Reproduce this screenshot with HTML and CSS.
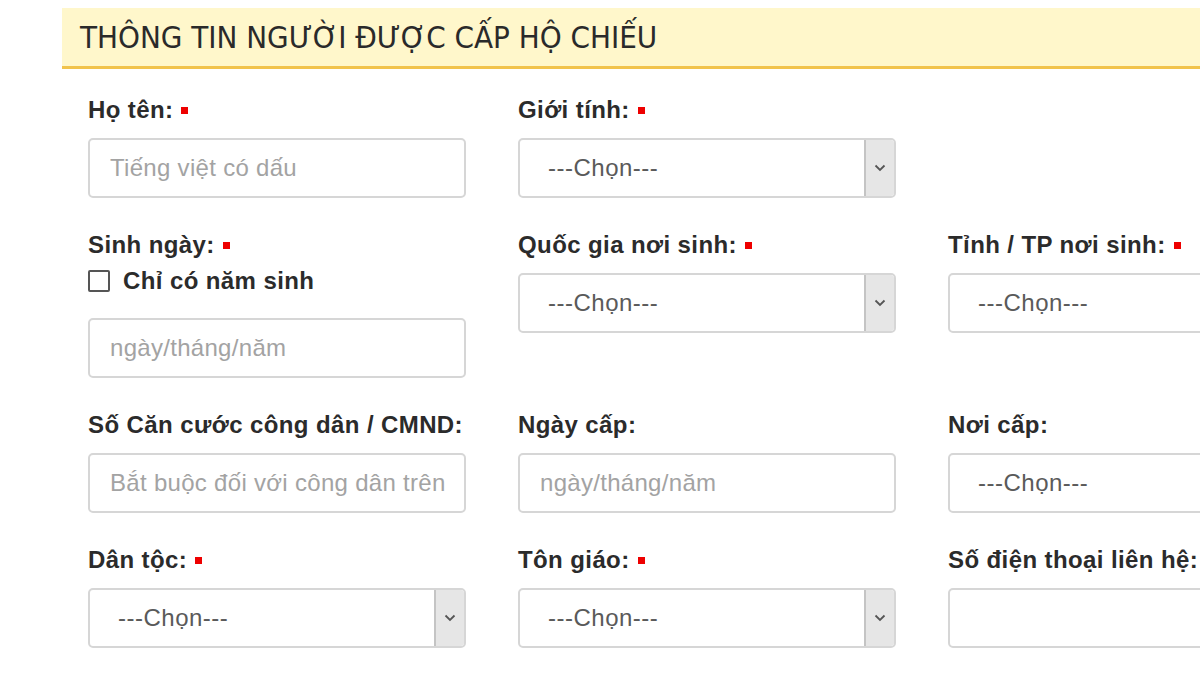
FILE: index.html
```html
<!DOCTYPE html>
<html lang="vi">
<head>
<meta charset="utf-8">
<title>Thông tin người được cấp hộ chiếu</title>
<link rel="stylesheet" href="styles.css">
</head>
<body>
<div class="page">
  <div class="section-head">
    <h2 class="section-title">THÔNG TIN NGƯỜI ĐƯỢC CẤP HỘ CHIẾU</h2>
  </div>
  <div class="form-grid">
    <div class="field">
      <label class="lbl">Họ tên: <span class="req"></span></label>
      <div class="input"><span class="ph">Tiếng việt có dấu</span></div>
    </div>
    <div class="field">
      <label class="lbl">Giới tính: <span class="req"></span></label>
      <div class="input select"><span class="val">---Chọn---</span><span class="arrow"><svg width="12" height="8" viewBox="0 0 12 8"><path d="M1.5 1.5 L6 6 L10.5 1.5" fill="none" stroke="#555" stroke-width="1.8"/></svg></span></div>
    </div>
    <div class="field"></div>

    <div class="field">
      <label class="lbl">Sinh ngày: <span class="req"></span></label>
      <div class="check-row"><span class="checkbox"></span><span class="check-text">Chỉ có năm sinh</span></div>
      <div class="input"><span class="ph">ngày/tháng/năm</span></div>
    </div>
    <div class="field">
      <label class="lbl">Quốc gia nơi sinh: <span class="req"></span></label>
      <div class="input select"><span class="val">---Chọn---</span><span class="arrow"><svg width="12" height="8" viewBox="0 0 12 8"><path d="M1.5 1.5 L6 6 L10.5 1.5" fill="none" stroke="#555" stroke-width="1.8"/></svg></span></div>
    </div>
    <div class="field">
      <label class="lbl">Tỉnh / TP nơi sinh: <span class="req"></span></label>
      <div class="input select"><span class="val">---Chọn---</span><span class="arrow"><svg width="12" height="8" viewBox="0 0 12 8"><path d="M1.5 1.5 L6 6 L10.5 1.5" fill="none" stroke="#555" stroke-width="1.8"/></svg></span></div>
    </div>

    <div class="field">
      <label class="lbl">Số Căn cước công dân / CMND:</label>
      <div class="input"><span class="ph">Bắt buộc đối với công dân trên</span></div>
    </div>
    <div class="field">
      <label class="lbl">Ngày cấp:</label>
      <div class="input"><span class="ph">ngày/tháng/năm</span></div>
    </div>
    <div class="field">
      <label class="lbl">Nơi cấp:</label>
      <div class="input select"><span class="val">---Chọn---</span><span class="arrow"><svg width="12" height="8" viewBox="0 0 12 8"><path d="M1.5 1.5 L6 6 L10.5 1.5" fill="none" stroke="#555" stroke-width="1.8"/></svg></span></div>
    </div>

    <div class="field">
      <label class="lbl">Dân tộc: <span class="req"></span></label>
      <div class="input select"><span class="val">---Chọn---</span><span class="arrow"><svg width="12" height="8" viewBox="0 0 12 8"><path d="M1.5 1.5 L6 6 L10.5 1.5" fill="none" stroke="#555" stroke-width="1.8"/></svg></span></div>
    </div>
    <div class="field">
      <label class="lbl">Tôn giáo: <span class="req"></span></label>
      <div class="input select"><span class="val">---Chọn---</span><span class="arrow"><svg width="12" height="8" viewBox="0 0 12 8"><path d="M1.5 1.5 L6 6 L10.5 1.5" fill="none" stroke="#555" stroke-width="1.8"/></svg></span></div>
    </div>
    <div class="field">
      <label class="lbl">Số điện thoại liên hệ:</label>
      <div class="input"></div>
    </div>
  </div>
</div>
</body>
</html>
```

FILE: styles.css
```css
html, body {
  margin: 0;
  padding: 0;
  background: #ffffff;
  overflow: hidden;
}

body {
  width: 1200px;
  height: 675px;
  font-family: "Liberation Sans", Arial, sans-serif;
  color: #333333;
}

.page {
  padding: 8px 0 0 62px;
  width: 1138px;
  overflow: hidden;
}

.section-head {
  background: #fff7cb;
  border-bottom: 3px solid #f1c34c;
  height: 58px;
  display: flex;
  align-items: center;
  padding-left: 18px;
}

.section-title {
  margin: 0;
  font-family: "DejaVu Sans Condensed", "DejaVu Sans", sans-serif;
  font-weight: normal;
  font-size: 31px;
  color: #2a2a2a;
  letter-spacing: 0;
}

.form-grid {
  display: grid;
  grid-template-columns: 378px 378px 378px;
  column-gap: 52px;
  row-gap: 34px;
  padding: 28px 0 0 26px;
  align-items: start;
}

.field {
  display: flex;
  flex-direction: column;
}

.lbl {
  font-weight: bold;
  font-size: 24px;
  line-height: 26px;
  letter-spacing: 0.4px;
  color: #2b2b2b;
  margin-bottom: 15px;
  display: flex;
  align-items: center;
  white-space: nowrap;
}

.req {
  display: inline-block;
  width: 7px;
  height: 7px;
  background: #ee0000;
  margin-left: 8px;
}

.check-row {
  display: flex;
  align-items: center;
  height: 26px;
  margin-top: -5px;
  margin-bottom: 24px;
}

.checkbox {
  width: 18px;
  height: 18px;
  border: 2px solid #555555;
  border-radius: 2px;
  margin-right: 13px;
}

.check-text {
  font-weight: bold;
  font-size: 24px;
  letter-spacing: 0.4px;
  color: #2b2b2b;
}

.input {
  box-sizing: border-box;
  height: 60px;
  border: 2px solid #d6d6d6;
  border-radius: 5px;
  display: flex;
  align-items: center;
  padding-left: 20px;
  font-size: 24px;
  letter-spacing: 0.3px;
  background: #ffffff;
}

.ph {
  color: #a3a3a3;
  white-space: nowrap;
  overflow: hidden;
}

.select {
  padding-left: 28px;
}

.val {
  color: #5a5a5a;
  flex: 1;
  letter-spacing: 0.5px;
}

.arrow {
  align-self: stretch;
  width: 28px;
  background: #e6e6e6;
  border-left: 2px solid #c4c4c4;
  border-radius: 0 3px 3px 0;
  display: flex;
  align-items: center;
  justify-content: center;
}
```
